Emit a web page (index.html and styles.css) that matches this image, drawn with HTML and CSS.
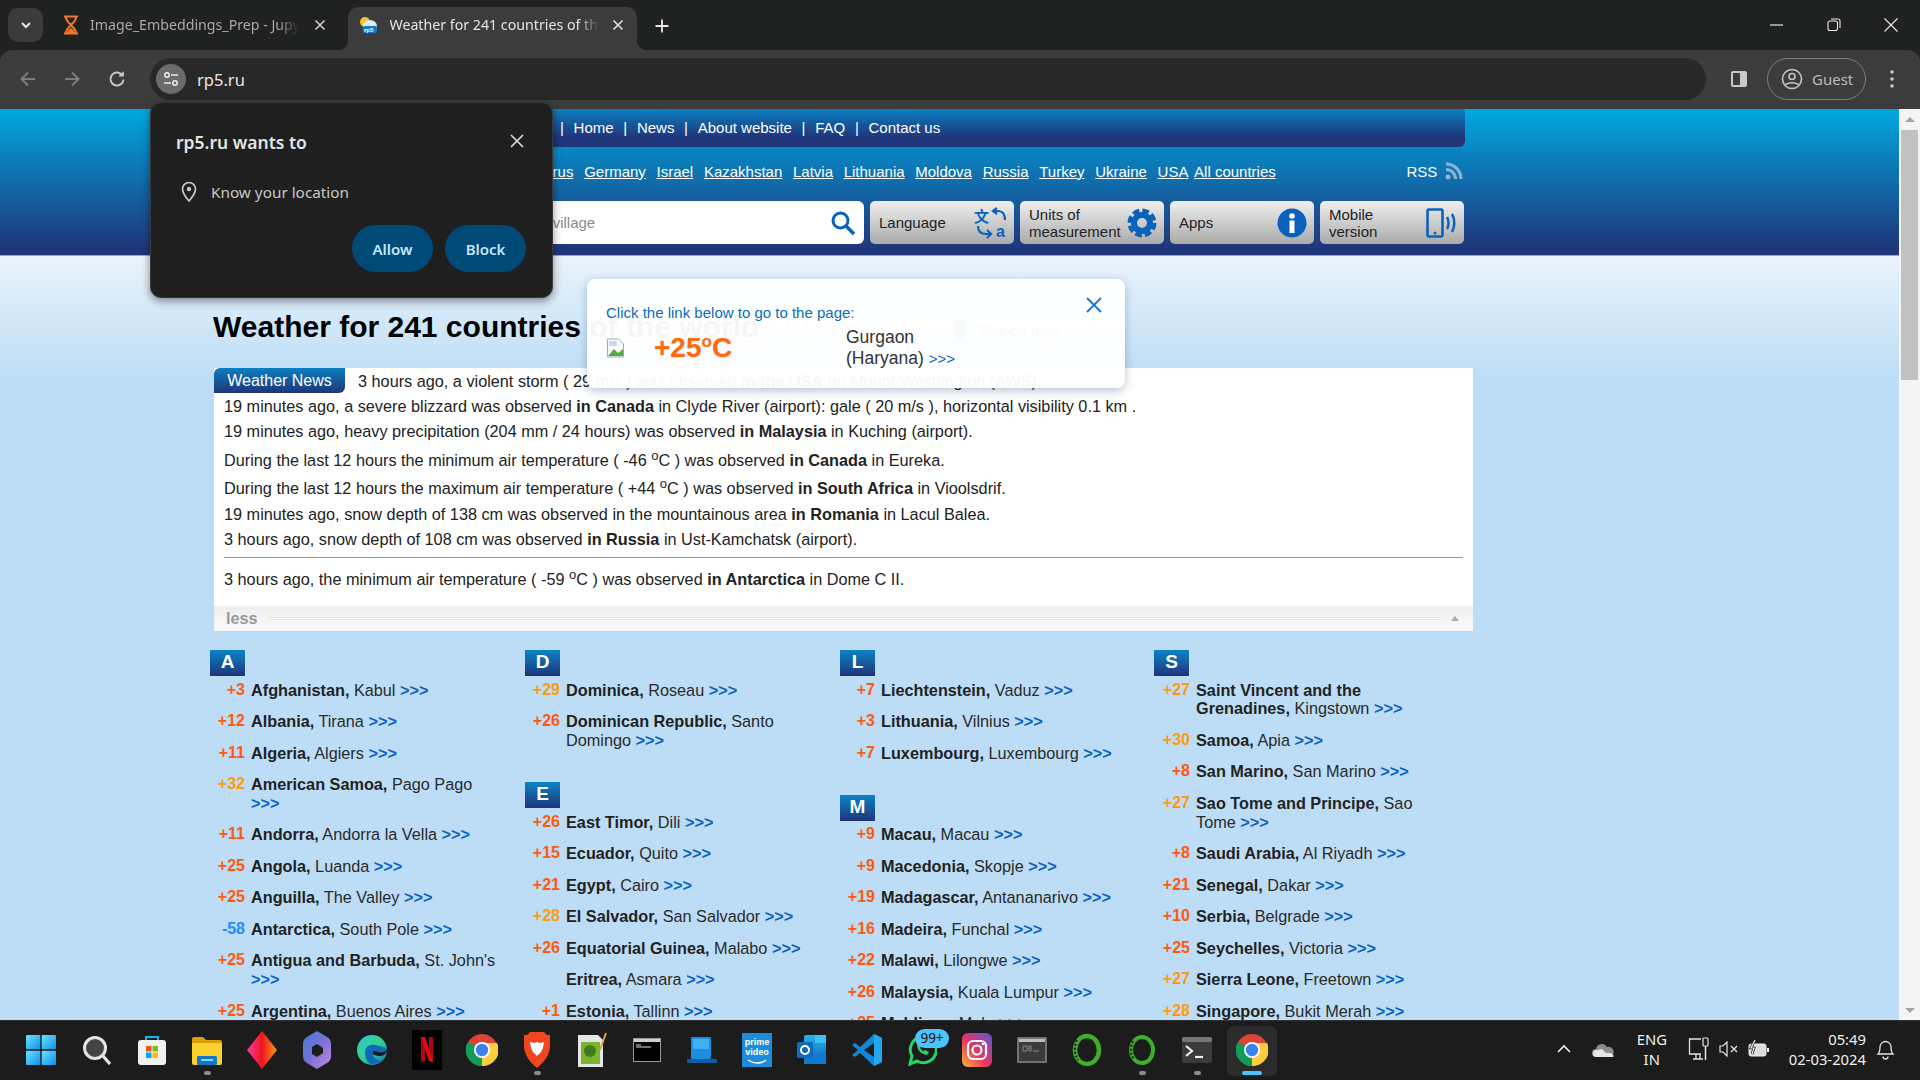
FILE: index.html
```html
<!DOCTYPE html>
<html lang="en">
<head>
<meta charset="utf-8">
<title>Weather for 241 countries of the world</title>
<link rel="stylesheet" href="styles.css">
</head>
<body>
<div class="screen">
  <svg class="defs" width="0" height="0">
    <defs>
      <linearGradient id="gWin" x1="0" y1="0" x2="1" y2="1"><stop offset="0" stop-color="#6fe3fb"/><stop offset="1" stop-color="#0c8ff0"/></linearGradient>
      <linearGradient id="gDia" x1="0" y1="0" x2="1" y2="0"><stop offset="0" stop-color="#f53fa0"/><stop offset=".5" stop-color="#f0141e"/><stop offset="1" stop-color="#f79a12"/></linearGradient>
      <linearGradient id="gCop" x1="0" y1="0" x2="1" y2="1"><stop offset="0" stop-color="#3b7fd8"/><stop offset=".5" stop-color="#7b6fd8"/><stop offset="1" stop-color="#c48be0"/></linearGradient>
      <linearGradient id="gEdge" x1="0" y1="0" x2="1" y2="1"><stop offset="0" stop-color="#2fc4d8"/><stop offset=".5" stop-color="#37d08f"/><stop offset="1" stop-color="#0f6fc0"/></linearGradient>
      <linearGradient id="gInsta" x1="0" y1="1" x2="1" y2="0"><stop offset="0" stop-color="#fdb53a"/><stop offset=".45" stop-color="#e8355f"/><stop offset="1" stop-color="#5d55d8"/></linearGradient>
      <linearGradient id="gOut" x1="0" y1="0" x2="0" y2="1"><stop offset="0" stop-color="#29b3f0"/><stop offset="1" stop-color="#0b62b5"/></linearGradient>
    </defs>
  </svg>

  <div class="tabstrip">
    <div class="tab-menu"><svg width="14" height="14" viewBox="0 0 14 14"><path d="M3 5l4 4 4-4" fill="none" stroke="#e6e6e6" stroke-width="2"/></svg></div>
    <div class="tab">
      <svg class="fav" width="18" height="20" viewBox="0 0 18 20"><path d="M2 1.500h14M2 18.500h14M4 2c0 5 4 6 5 8 1-2 5-3 5-8M4 18c0-4 4-6 5-8 1 2 5 4 5 8" fill="none" stroke="#f37726" stroke-width="2"/><path d="M5 18c1-3 3-4 4-5 1 1 3 2 4 5z" fill="#f37726"/></svg>
      <span class="tab-title">Image_Embeddings_Prep - Jupyter Notebook</span>
      <svg class="tab-x" width="12" height="12" viewBox="0 0 12 12"><path d="M1.500 1.500l9 9M10.500 1.500l-9 9" stroke="#d0d0d0" stroke-width="1.600"/></svg>
    </div>
    <div class="tab tab-active">
      <svg class="fav" width="20" height="20" viewBox="0 0 20 20"><circle cx="7" cy="7" r="5" fill="#f7c325"/><ellipse cx="12" cy="11" rx="7" ry="6" fill="#dcebf8"/><rect x="5" y="11" width="14" height="7" rx="1.500" fill="#1b75c9"/><text x="6" y="17" class="fav-text">rp5</text></svg>
      <span class="tab-title">Weather for 241 countries of the world</span>
      <svg class="tab-x" width="12" height="12" viewBox="0 0 12 12"><path d="M1.500 1.500l9 9M10.500 1.500l-9 9" stroke="#e6e6e6" stroke-width="1.600"/></svg>
    </div>
    <svg class="tab-new" width="16" height="16" viewBox="0 0 16 16"><path d="M8 1.500v13M1.500 8h13" stroke="#e6e6e6" stroke-width="1.800"/></svg>
    <div class="win-controls">
      <svg width="14" height="14" viewBox="0 0 14 14"><path d="M0 7h13" stroke="#e8e8e8" stroke-width="1.200"/></svg>
      <svg width="14" height="14" viewBox="0 0 14 14"><rect x="1" y="3" width="9.500" height="9.500" rx="2" fill="none" stroke="#e8e8e8" stroke-width="1.100"/><path d="M4 1h7a2 2 0 0 1 2 2v7" fill="none" stroke="#e8e8e8" stroke-width="1.100"/></svg>
      <svg width="14" height="14" viewBox="0 0 14 14"><path d="M.500.500l13 13M13.500.500l-13 13" stroke="#e8e8e8" stroke-width="1.100"/></svg>
    </div>
  </div>

  <div class="toolbar">
    <svg class="nav nav-back" width="20" height="20" viewBox="0 0 20 20"><path d="M17 10H4M10 3.500L3.500 10l6.500 6.500" fill="none" stroke="#7c7c7c" stroke-width="2"/></svg>
    <svg class="nav" width="20" height="20" viewBox="0 0 20 20"><path d="M3 10h13M10 3.500l6.500 6.500-6.500 6.500" fill="none" stroke="#7c7c7c" stroke-width="2"/></svg>
    <svg class="nav nav-reload" width="20" height="20" viewBox="0 0 20 20"><path d="M16.500 10.500a6.500 6.500 0 1 1-2-5.200" fill="none" stroke="#c8c8c8" stroke-width="2"/><path d="M16.800 2v5.500h-5.500z" fill="#c8c8c8"/></svg>
    <div class="omnibox">
      <span class="site-icon"><svg width="18" height="18" viewBox="0 0 18 18"><circle cx="5" cy="5" r="2.200" fill="none" stroke="#eee" stroke-width="1.500"/><path d="M9 5h7M2 13h7" stroke="#eee" stroke-width="1.600"/><circle cx="13" cy="13" r="2.200" fill="none" stroke="#eee" stroke-width="1.500"/></svg></span>
      <span class="url">rp5.ru</span>
    </div>
    <svg class="side-panel" width="18" height="18" viewBox="0 0 18 18"><rect x="1" y="1" width="16" height="16" rx="2" fill="#c9c9c9"/><rect x="3" y="3" width="7" height="12" fill="#3c3c3c"/></svg>
    <div class="guest">
      <svg width="22" height="22" viewBox="0 0 22 22"><circle cx="11" cy="11" r="9.500" fill="none" stroke="#c4c4c4" stroke-width="1.600"/><circle cx="11" cy="8.500" r="3" fill="none" stroke="#c4c4c4" stroke-width="1.600"/><path d="M4.500 17c2-3 11-3 13 0" fill="none" stroke="#c4c4c4" stroke-width="1.600"/></svg>
      <span>Guest</span>
    </div>
    <svg class="kebab" width="4" height="20" viewBox="0 0 4 20"><circle cx="2" cy="3" r="1.800" fill="#c8c8c8"/><circle cx="2" cy="10" r="1.800" fill="#c8c8c8"/><circle cx="2" cy="17" r="1.800" fill="#c8c8c8"/></svg>
  </div>

  <div class="viewport">
    <main class="page">
      <header class="site-head">
        <nav class="topbar">
          <span>|</span><a>Home</a><span>|</span><a>News</a><span>|</span><a>About website</a><span>|</span><a>FAQ</a><span>|</span><a>Contact us</a>
        </nav>
        <div class="countries-bar">
          <a class="cl">Belarus</a><a class="cl">Germany</a><a class="cl">Israel</a><a class="cl">Kazakhstan</a><a class="cl">Latvia</a><a class="cl">Lithuania</a><a class="cl">Moldova</a><a class="cl">Russia</a><a class="cl">Turkey</a><a class="cl">Ukraine</a><a class="cl">USA</a><a class="cl cl-all">All countries</a>
          <span class="rss">RSS</span>
          <svg class="rss-icon" width="18" height="18" viewBox="0 0 18 18"><circle cx="3" cy="15" r="2.500" fill="#8fb3d6"/><path d="M1 7.500a9.500 9.500 0 0 1 9.500 9.500M1 2a15 15 0 0 1 15 15" fill="none" stroke="#8fb3d6" stroke-width="3"/></svg>
        </div>
        <div class="tools">
          <div class="search"><span class="placeholder">Town or village</span>
            <svg width="26" height="26" viewBox="0 0 26 26"><circle cx="10.500" cy="10.500" r="7.500" fill="none" stroke="#0b62bd" stroke-width="3"/><path d="M16 16l8 8" stroke="#0b62bd" stroke-width="3.500"/></svg>
          </div>
          <div class="tool"><span>Language</span>
            <svg width="34" height="32" viewBox="0 0 34 32"><text x="0" y="15" class="lang-zh">文</text><text x="22" y="30" class="lang-a">a</text><path d="M19 4h5c5 0 7 4 7 9M23 1l-4 3 4 3M4 19c0 5 3 8 8 8h4M13 23l4 4-4 4" fill="none" stroke="#0b62bd" stroke-width="2.200"/></svg>
          </div>
          <div class="tool tool-gear"><span>Units of<br>measurement</span>
            <svg width="30" height="30" viewBox="0 0 30 30"><circle cx="15" cy="15" r="8" fill="none" stroke="#0b62bd" stroke-width="6"/><circle cx="15" cy="15" r="12" fill="none" stroke="#0b62bd" stroke-width="5" stroke-dasharray="6.500 2.920"/></svg>
          </div>
          <div class="tool tool-gear"><span>Apps</span>
            <svg width="30" height="30" viewBox="0 0 30 30"><circle cx="15" cy="15" r="14.500" fill="#0b62bd"/><circle cx="15" cy="8" r="2.800" fill="#fff"/><rect x="12.500" y="12.500" width="5" height="12.500" fill="#fff"/></svg>
          </div>
          <div class="tool"><span>Mobile<br>version</span>
            <svg width="32" height="30" viewBox="0 0 32 30"><rect x="1.500" y="1.500" width="15" height="27" rx="1.500" fill="none" stroke="#0b62bd" stroke-width="2.600"/><circle cx="9" cy="25" r="1.500" fill="#0b62bd"/><path d="M21 9c2 3 2 9 0 12M26 6c3 5 3 13 0 18" fill="none" stroke="#0b62bd" stroke-width="2.500"/></svg>
          </div>
        </div>
      </header>

      <div class="head-line">
        <h1>Weather for 241 countries of the world</h1>
        <svg class="clock" width="24" height="24" viewBox="0 0 24 24"><circle cx="12" cy="12" r="10" fill="none" stroke="#9aa" stroke-width="2"/><path d="M12 6v6l4 3" fill="none" stroke="#9aa" stroke-width="2"/></svg>
        <span class="utc">UTC+5:30</span>
        <svg class="pin" width="16" height="24" viewBox="0 0 16 24"><path d="M8 1a7 7 0 0 0-7 7c0 5 7 15 7 15s7-10 7-15a7 7 0 0 0-7-7z" fill="#0b6cbb"/></svg>
        <span class="see-map">See on map</span>
      </div>

      <section class="news">
        <div class="news-first"><span class="news-tab">Weather News</span><span>3 hours ago, a violent storm ( 29 m/s ) was observed <b>in the USA</b> on Mount Washington (AWS).</span></div>
        <p class="nl">19 minutes ago, a severe blizzard was observed <b>in Canada</b> in Clyde River (airport): gale ( 20 m/s ), horizontal visibility 0.1 km .</p>
        <p class="nl">19 minutes ago, heavy precipitation (204 mm / 24 hours) was observed <b>in Malaysia</b> in Kuching (airport).</p>
        <p class="nl nl-s1">During the last 12 hours the minimum air temperature ( -46 <sup>o</sup>C ) was observed <b>in Canada</b> in Eureka.</p>
        <p class="nl nl-s2">During the last 12 hours the maximum air temperature ( +44 <sup>o</sup>C ) was observed <b>in South Africa</b> in Vioolsdrif.</p>
        <p class="nl">19 minutes ago, snow depth of 138 cm was observed in the mountainous area <b>in Romania</b> in Lacul Balea.</p>
        <p class="nl">3 hours ago, snow depth of 108 cm was observed <b>in Russia</b> in Ust-Kamchatsk (airport).</p>
        <div class="news-rule"></div>
        <p class="nl">3 hours ago, the minimum air temperature ( -59 <sup>o</sup>C ) was observed <b>in Antarctica</b> in Dome C II.</p>
        <div class="less"><span>less</span><i class="less-line"></i><i class="less-arrow"></i></div>
      </section>

      <section class="countries">
        <div class="col">
          <div class="letter">A</div>
          <div class="row"><span class="t hot">+3</span><p class="n"><b>Afghanistan,</b> Kabul <a>&gt;&gt;&gt;</a></p></div>
          <div class="row"><span class="t hot">+12</span><p class="n"><b>Albania,</b> Tirana <a>&gt;&gt;&gt;</a></p></div>
          <div class="row"><span class="t hot">+11</span><p class="n"><b>Algeria,</b> Algiers <a>&gt;&gt;&gt;</a></p></div>
          <div class="row"><span class="t warm">+32</span><p class="n"><b>American Samoa,</b> Pago Pago <a>&gt;&gt;&gt;</a></p></div>
          <div class="row"><span class="t hot">+11</span><p class="n"><b>Andorra,</b> Andorra la Vella <a>&gt;&gt;&gt;</a></p></div>
          <div class="row"><span class="t hot">+25</span><p class="n"><b>Angola,</b> Luanda <a>&gt;&gt;&gt;</a></p></div>
          <div class="row"><span class="t hot">+25</span><p class="n"><b>Anguilla,</b> The Valley <a>&gt;&gt;&gt;</a></p></div>
          <div class="row"><span class="t cold">-58</span><p class="n"><b>Antarctica,</b> South Pole <a>&gt;&gt;&gt;</a></p></div>
          <div class="row"><span class="t hot">+25</span><p class="n"><b>Antigua and Barbuda,</b> St. John's <a>&gt;&gt;&gt;</a></p></div>
          <div class="row"><span class="t hot">+25</span><p class="n"><b>Argentina,</b> Buenos Aires <a>&gt;&gt;&gt;</a></p></div>
        </div>
        <div class="col">
          <div class="letter">D</div>
          <div class="row"><span class="t warm">+29</span><p class="n"><b>Dominica,</b> Roseau <a>&gt;&gt;&gt;</a></p></div>
          <div class="row"><span class="t hot">+26</span><p class="n"><b>Dominican Republic,</b> Santo Domingo <a>&gt;&gt;&gt;</a></p></div>
          <div class="letter letter-next">E</div>
          <div class="row"><span class="t hot">+26</span><p class="n"><b>East Timor,</b> Dili <a>&gt;&gt;&gt;</a></p></div>
          <div class="row"><span class="t hot">+15</span><p class="n"><b>Ecuador,</b> Quito <a>&gt;&gt;&gt;</a></p></div>
          <div class="row"><span class="t hot">+21</span><p class="n"><b>Egypt,</b> Cairo <a>&gt;&gt;&gt;</a></p></div>
          <div class="row"><span class="t warm">+28</span><p class="n"><b>El Salvador,</b> San Salvador <a>&gt;&gt;&gt;</a></p></div>
          <div class="row"><span class="t hot">+26</span><p class="n"><b>Equatorial Guinea,</b> Malabo <a>&gt;&gt;&gt;</a></p></div>
          <div class="row"><span class="t"></span><p class="n"><b>Eritrea,</b> Asmara <a>&gt;&gt;&gt;</a></p></div>
          <div class="row"><span class="t hot">+1</span><p class="n"><b>Estonia,</b> Tallinn <a>&gt;&gt;&gt;</a></p></div>
        </div>
        <div class="col">
          <div class="letter">L</div>
          <div class="row"><span class="t hot">+7</span><p class="n"><b>Liechtenstein,</b> Vaduz <a>&gt;&gt;&gt;</a></p></div>
          <div class="row"><span class="t hot">+3</span><p class="n"><b>Lithuania,</b> Vilnius <a>&gt;&gt;&gt;</a></p></div>
          <div class="row"><span class="t hot">+7</span><p class="n"><b>Luxembourg,</b> Luxembourg <a>&gt;&gt;&gt;</a></p></div>
          <div class="letter letter-next">M</div>
          <div class="row"><span class="t hot">+9</span><p class="n"><b>Macau,</b> Macau <a>&gt;&gt;&gt;</a></p></div>
          <div class="row"><span class="t hot">+9</span><p class="n"><b>Macedonia,</b> Skopje <a>&gt;&gt;&gt;</a></p></div>
          <div class="row"><span class="t hot">+19</span><p class="n"><b>Madagascar,</b> Antananarivo <a>&gt;&gt;&gt;</a></p></div>
          <div class="row"><span class="t hot">+16</span><p class="n"><b>Madeira,</b> Funchal <a>&gt;&gt;&gt;</a></p></div>
          <div class="row"><span class="t hot">+22</span><p class="n"><b>Malawi,</b> Lilongwe <a>&gt;&gt;&gt;</a></p></div>
          <div class="row"><span class="t hot">+26</span><p class="n"><b>Malaysia,</b> Kuala Lumpur <a>&gt;&gt;&gt;</a></p></div>
          <div class="row"><span class="t hot">+25</span><p class="n"><b>Maldives,</b> Male <a>&gt;&gt;&gt;</a></p></div>
        </div>
        <div class="col col-last">
          <div class="letter">S</div>
          <div class="row"><span class="t warm">+27</span><p class="n"><b>Saint Vincent and the Grenadines,</b> Kingstown <a>&gt;&gt;&gt;</a></p></div>
          <div class="row"><span class="t warm">+30</span><p class="n"><b>Samoa,</b> Apia <a>&gt;&gt;&gt;</a></p></div>
          <div class="row"><span class="t hot">+8</span><p class="n"><b>San Marino,</b> San Marino <a>&gt;&gt;&gt;</a></p></div>
          <div class="row"><span class="t warm">+27</span><p class="n"><b>Sao Tome and Principe,</b> Sao Tome <a>&gt;&gt;&gt;</a></p></div>
          <div class="row"><span class="t hot">+8</span><p class="n"><b>Saudi Arabia,</b> Al Riyadh <a>&gt;&gt;&gt;</a></p></div>
          <div class="row"><span class="t hot">+21</span><p class="n"><b>Senegal,</b> Dakar <a>&gt;&gt;&gt;</a></p></div>
          <div class="row"><span class="t hot">+10</span><p class="n"><b>Serbia,</b> Belgrade <a>&gt;&gt;&gt;</a></p></div>
          <div class="row"><span class="t hot">+25</span><p class="n"><b>Seychelles,</b> Victoria <a>&gt;&gt;&gt;</a></p></div>
          <div class="row"><span class="t warm">+27</span><p class="n"><b>Sierra Leone,</b> Freetown <a>&gt;&gt;&gt;</a></p></div>
          <div class="row"><span class="t warm">+28</span><p class="n"><b>Singapore,</b> Bukit Merah <a>&gt;&gt;&gt;</a></p></div>
        </div>
      </section>

      <aside class="geo-tip">
        <svg class="geo-x" width="16" height="16" viewBox="0 0 16 16"><path d="M1 1l14 14M15 1L1 15" stroke="#1b75c9" stroke-width="1.800"/></svg>
        <p class="geo-hint">Click the link below to go to the page:</p>
        <div class="geo-row">
          <svg class="broken" width="20" height="20" viewBox="0 0 20 20"><path d="M1.500 1h11l5 5v13h-16z" fill="#fff" stroke="#9ab" stroke-width="1"/><path d="M2 18l6-7 4 4 5-4v7z" fill="#5aa845"/><path d="M3 3h8v5H3z" fill="#c6d8f5"/></svg>
          <span class="geo-temp">+25<sup>o</sup>C</span>
          <span class="geo-city">Gurgaon<br>(Haryana) <a>&gt;&gt;&gt;</a></span>
        </div>
      </aside>
    </main>
    <div class="scrollbar">
      <i class="sb-up"></i>
      <i class="sb-thumb"></i>
      <i class="sb-down"></i>
    </div>
  </div>

  <div class="perm-popup">
    <svg class="perm-x" width="14" height="14" viewBox="0 0 14 14"><path d="M1 1l12 12M13 1L1 13" stroke="#d8d8d8" stroke-width="1.700"/></svg>
    <h2>rp5.ru wants to</h2>
    <div class="perm-line">
      <svg width="16" height="22" viewBox="0 0 16 22"><path d="M8 1.500a6.500 6.500 0 0 0-6.500 6.500c0 4.500 6.500 12 6.500 12s6.500-7.500 6.500-12A6.500 6.500 0 0 0 8 1.500z" fill="none" stroke="#c7c7c7" stroke-width="1.700"/><circle cx="8" cy="8" r="2.200" fill="#c7c7c7"/></svg>
      <span>Know your location</span>
    </div>
    <div class="perm-actions"><span class="perm-btn">Allow</span><span class="perm-btn">Block</span></div>
  </div>

  <footer class="taskbar">
    <div class="ti ti-start"><svg width="30" height="30" viewBox="0 0 30 30"><rect x="0" y="0" width="14.300" height="14.300" rx="1" fill="url(#gWin)"/><rect x="15.700" y="0" width="14.300" height="14.300" rx="1" fill="url(#gWin)"/><rect x="0" y="15.700" width="14.300" height="14.300" rx="1" fill="url(#gWin)"/><rect x="15.700" y="15.700" width="14.300" height="14.300" rx="1" fill="url(#gWin)"/></svg></div>
    <div class="ti"><svg width="30" height="30" viewBox="0 0 30 30"><circle cx="13" cy="13" r="10.500" fill="#444" stroke="#e4e4e4" stroke-width="3"/><path d="M21 21l7 8" stroke="#e4e4e4" stroke-width="3.200"/></svg></div>
    <div class="ti"><svg width="30" height="30" viewBox="0 0 30 30"><path d="M9 6V2h12v4" fill="none" stroke="#19b5e8" stroke-width="2"/><rect x="1" y="5" width="28" height="25" rx="3" fill="#f1f1f1"/><rect x="9" y="11" width="5.500" height="5.500" fill="#f05325"/><rect x="15.500" y="11" width="5.500" height="5.500" fill="#81bc06"/><rect x="9" y="17.500" width="5.500" height="5.500" fill="#05a6f0"/><rect x="15.500" y="17.500" width="5.500" height="5.500" fill="#ffba08"/></svg></div>
    <div class="ti ti-open"><svg width="30" height="30" viewBox="0 0 30 30"><path d="M0 4a2 2 0 0 1 2-2h9l3 3h14a2 2 0 0 1 2 2v3H0z" fill="#d9a00c"/><path d="M0 8h30v20a2 2 0 0 1-2 2H2a2 2 0 0 1-2-2z" fill="#fbd12f"/><rect x="5" y="21" width="20" height="9" rx="1.500" fill="#0f78c8"/><rect x="9" y="24" width="12" height="2" fill="#8fd0f7"/></svg></div>
    <div class="ti"><svg width="30" height="38" viewBox="0 0 30 38"><polygon points="15,0 30,19 15,38 0,19" fill="url(#gDia)"/></svg></div>
    <div class="ti"><svg width="28" height="38" viewBox="0 0 28 38"><path d="M14 0l10 6c3 2 4 4 4 7v12c0 3-1 5-4 7l-10 6-10-6c-3-2-4-4-4-7V13c0-3 1-5 4-7z" fill="url(#gCop)"/><path d="M14 13l6 4v5l-6 4-5-3v-7z" fill="#1c1c1c"/></svg></div>
    <div class="ti"><svg width="30" height="30" viewBox="0 0 30 30"><circle cx="15" cy="15" r="15" fill="url(#gEdge)"/><path d="M30 15c0 4-4 6-8 6-6 0-8-4-8-6 0-3 3-5 6-4 3 0 6 2 10 4z" fill="#1c1c1c"/><path d="M8 17c0-6 6-8 10-7 6 1 12 3 12 5-2 2-5 3-8 2-3 0-5-2-5-1-2 1-1 4 0 6 2 3 6 4 8 3-3 3-7 5-11 4-4-1-6-7-6-12z" fill="#0e6ab8"/></svg></div>
    <div class="ti"><svg width="30" height="40" viewBox="0 0 30 40"><rect width="30" height="40" fill="#000"/><path d="M9 7h4v24l-4 1zM17 7h4v25l-4-1z" fill="#b1060f"/><polygon points="9,7 13,7 21,32 17,31" fill="#e50914"/></svg></div>
    <div class="ti"><svg width="32" height="32" viewBox="0 0 32 32"><circle cx="16" cy="16" r="16" fill="#db4437"/><path d="M16 16L2 8a16 16 0 0 0 14 24z" fill="#0f9d58"/><path d="M16 16l0 16A16 16 0 0 0 31 9H16z" fill="#ffcd40"/><circle cx="16" cy="16" r="8" fill="#fff"/><circle cx="16" cy="16" r="6.200" fill="#3b82ef"/></svg></div>
    <div class="ti ti-open"><svg width="26" height="36" viewBox="0 0 26 36"><path d="M6 0h14l3 3 3 0v11c0 10-8 18-13 22C8 32 0 24 0 14V3h3z" fill="#f0461e"/><path d="M6 10l4 1 3-1 3 1 4-1-1 6-2 4-4 4-4-4-2-4z" fill="#fff"/></svg></div>
    <div class="ti"><svg width="30" height="36" viewBox="0 0 30 36"><path d="M1 3h20l5 5v27H1z" fill="#e6e6e6"/><rect x="4" y="10" width="19" height="22" fill="#7bb52f"/><circle cx="13" cy="19" r="6" fill="#3f7a1c"/><path d="M23 18L29 1" stroke="#d8a53c" stroke-width="2"/></svg></div>
    <div class="ti"><svg width="28" height="24" viewBox="0 0 28 24"><rect x=".5" y=".5" width="27" height="23" fill="#000" stroke="#9a9a9a"/><rect x="1" y="1" width="26" height="3" fill="#cfcfcf"/><path d="M3 7h5M3 9h15" stroke="#ddd" stroke-width="1"/></svg></div>
    <div class="ti"><svg width="30" height="30" viewBox="0 0 30 30"><rect x="4" y="2" width="20" height="22" rx="1" fill="#1a8fe0"/><rect x="0" y="24" width="30" height="4" fill="#0a5fa8"/><rect x="6" y="4" width="16" height="10" fill="#3fb0f2"/></svg></div>
    <div class="ti"><svg width="30" height="34" viewBox="0 0 30 34"><rect width="30" height="34" fill="#1c8ddb"/><text x="15" y="12" class="prime-t">prime</text><text x="15" y="22" class="prime-t">video</text><path d="M6 27c6 4 13 4 18 0" fill="none" stroke="#fff" stroke-width="1.500"/></svg></div>
    <div class="ti"><svg width="30" height="32" viewBox="0 0 30 32"><rect x="7" y="1" width="22" height="29" rx="2" fill="url(#gOut)"/><path d="M7 16l11 8 11-8v14H7z" fill="#0b7ad0"/><rect x="18" y="1" width="11" height="8" fill="#3cc1f2"/><rect x="0" y="8" width="16" height="16" rx="1.500" fill="#0f6cbd"/><circle cx="8" cy="16" r="4" fill="none" stroke="#fff" stroke-width="2"/></svg></div>
    <div class="ti"><svg width="30" height="32" viewBox="0 0 30 32"><path d="M22 0l8 4v24l-8 4L8 19l-5 4-3-2 6-5-6-5 3-2 5 4z" fill="#0f88d8"/><path d="M22 0l8 4v24l-8 4z" fill="#22a8ee"/><path d="M22 9L12 16l10 7z" fill="#1c1c1c"/></svg></div>
    <div class="ti"><svg width="30" height="32" viewBox="0 0 30 32"><path d="M3 30l2-8a13 13 0 1 1 5 5z" fill="none" stroke="#25d366" stroke-width="3"/><path d="M10 11c0 5 4 9 10 10l2-3-4-2-2 1-3-3 1-2-2-4z" fill="#25d366"/></svg><span class="wa-badge">99+</span></div>
    <div class="ti"><svg width="30" height="34" viewBox="0 0 30 34"><rect width="30" height="34" rx="6" fill="url(#gInsta)"/><rect x="6" y="8" width="18" height="18" rx="5" fill="none" stroke="#fff" stroke-width="2.200"/><circle cx="15" cy="17" r="4.500" fill="none" stroke="#fff" stroke-width="2.200"/><circle cx="21" cy="11" r="1.300" fill="#fff"/></svg></div>
    <div class="ti"><svg width="30" height="26" viewBox="0 0 30 26"><rect x="1" y="1" width="28" height="24" fill="#3a3a3a" stroke="#8a8a8a" stroke-width="1.500"/><rect x="2" y="2" width="26" height="3" fill="#bbb"/><path d="M6 9h4v5H6zM12 9h2v5h-2zM16 14h6" stroke="#888" fill="none"/></svg></div>
    <div class="ti"><svg width="30" height="34" viewBox="0 0 30 34"><ellipse cx="15" cy="17" rx="12" ry="14" fill="none" stroke="#3fae2a" stroke-width="4.500"/><path d="M5 7c-3 6-3 14 1 20" fill="none" stroke="#1c1c1c" stroke-width="2" stroke-dasharray="2 2"/></svg></div>
    <div class="ti ti-open"><svg width="28" height="32" viewBox="0 0 28 32"><ellipse cx="14" cy="16" rx="11" ry="13" fill="none" stroke="#3fae2a" stroke-width="4"/><path d="M5 7c-3 6-3 13 1 18" fill="none" stroke="#1c1c1c" stroke-width="2" stroke-dasharray="2 2"/></svg></div>
    <div class="ti ti-open"><svg width="30" height="26" viewBox="0 0 30 26"><rect width="30" height="26" rx="2" fill="#3a3a3a"/><rect width="30" height="5" rx="2" fill="#777"/><path d="M4 9l6 5-6 5" fill="none" stroke="#eee" stroke-width="2.200"/><path d="M13 20h8" stroke="#eee" stroke-width="2.200"/></svg></div>
    <div class="ti ti-active"><svg width="32" height="32" viewBox="0 0 32 32"><circle cx="16" cy="16" r="16" fill="#db4437"/><path d="M16 16L2 8a16 16 0 0 0 14 24z" fill="#0f9d58"/><path d="M16 16l0 16A16 16 0 0 0 31 9H16z" fill="#ffcd40"/><circle cx="16" cy="16" r="8" fill="#fff"/><circle cx="16" cy="16" r="6.200" fill="#3b82ef"/></svg></div>

    <div class="tray">
      <svg class="tr-caret" width="16" height="10" viewBox="0 0 16 10"><path d="M2 8l6-6 6 6" fill="none" stroke="#eee" stroke-width="1.600"/></svg>
      <svg class="tr-cloud" width="22" height="15" viewBox="0 0 22 15"><path d="M4 15a4 4 0 0 1 0-8 6 6 0 0 1 11-2 5 5 0 0 1 3 10z" fill="#8d8d8d"/><path d="M4 15a3.500 3.500 0 0 1 1-7l5-1 4 4 5 0 3 3-1 1z" fill="#e6e6e6"/></svg>
      <div class="tr-lang">ENG<br>IN</div>
      <svg class="tr-net" width="22" height="24" viewBox="0 0 22 24"><path d="M13 2H1.500v15H13" fill="none" stroke="#e4e4e4" stroke-width="1.300"/><path d="M5 22h10M8 17v5M12 17v5" stroke="#e4e4e4" stroke-width="1.300"/><rect x="15" y="1" width="5" height="8" rx="1" fill="none" stroke="#e4e4e4" stroke-width="1.200"/><path d="M17.500 9v14" stroke="#e4e4e4" stroke-width="1.500"/></svg>
      <svg class="tr-sound" width="20" height="16" viewBox="0 0 20 16"><path d="M1 5h3l4-4v14l-4-4H1z" fill="none" stroke="#e4e4e4" stroke-width="1.200"/><path d="M12 5l6 6M18 5l-6 6" stroke="#e4e4e4" stroke-width="1.300"/></svg>
      <svg class="tr-batt" width="22" height="18" viewBox="0 0 22 18"><rect x="1" y="4" width="17" height="12" rx="2" fill="#ddd" stroke="#eee"/><rect x="19" y="8" width="2" height="4" fill="#eee"/><path d="M7 0L3 8h3l-2 6" fill="none" stroke="#1c1c1c" stroke-width="2.600"/><path d="M7 0L3 8h3l-2 6" fill="none" stroke="#eee" stroke-width="1.200"/></svg>
      <div class="tr-time">05:49<br>02-03-2024</div>
      <svg class="tr-bell" width="19" height="22" viewBox="0 0 19 22"><path d="M2 16c2-2 2-4 2-7a5.500 5.500 0 0 1 11 0c0 3 0 5 2 7z" fill="none" stroke="#e4e4e4" stroke-width="1.300"/><path d="M7 18.500a2.500 2.500 0 0 0 5 0" fill="none" stroke="#e4e4e4" stroke-width="1.300"/></svg>
    </div>
  </footer>
</div>
</body>
</html>
```

FILE: styles.css
```css
* { box-sizing: border-box; }
html, body { margin: 0; height: 100%; overflow: hidden; }
body { font-family: "Liberation Sans", Arial, sans-serif; background: #1c1c1c; }
p, h1, h2 { margin: 0; }
a { color: inherit; }
.defs { position: absolute; }
.screen { position: relative; width: 1920px; height: 1080px; display: flex; flex-direction: column; overflow: hidden; background: #202221; }

/* browser tabs */
.tabstrip { height: 50px; flex: none; display: flex; align-items: flex-end; padding-left: 8px; font-family: "Noto Sans", sans-serif; font-size: 14.200px; }
.tab-menu { width: 35px; height: 34px; margin-bottom: 8px; border-radius: 10px; background: #3b3b3b; display: flex; align-items: center; justify-content: center; }
.tab { width: 297px; height: 43px; margin-left: 5px; padding: 0 14px 8px 14px; display: flex; align-items: center; gap: 10px; color: #a9a9a9; position: relative; }
.tab-active { width: 289px; background: #3c3c3c; color: #e4e4e4; border-radius: 10px 10px 0 0; margin-left: 3px; padding-left: 10px; gap: 11.500px; }
.tab-active::before, .tab-active::after { content: ""; position: absolute; bottom: 0; width: 10px; height: 10px; }
.tab-active::before { left: -10px; background: radial-gradient(circle at 0 0, transparent 10px, #3c3c3c 10.500px); }
.tab-active::after { right: -10px; background: radial-gradient(circle at 100% 0, transparent 10px, #3c3c3c 10.500px); }
.fav { flex: none; }
.fav-text { font: bold 6px "Liberation Sans", sans-serif; fill: #fff; }
.tab-title { flex: none; width: 209px; overflow: hidden; white-space: nowrap; -webkit-mask-image: linear-gradient(90deg, #000 90%, transparent); mask-image: linear-gradient(90deg, #000 90%, transparent); }
.tab-x { flex: none; margin-left: 4.500px; }
.tab-active .tab-x { margin-left: 2px; }
.tab-new { margin: 0 0 16px 17px; }
.win-controls { margin-left: auto; display: flex; gap: 43px; padding: 0 22px 18px 0; }

/* toolbar */
.toolbar { height: 59px; flex: none; display: flex; align-items: center; background: #3c3c3c; border-radius: 12px 12px 0 0; padding: 0 0 1px 18px; }
.nav { margin-right: 24px; flex: none; }
.nav-reload { margin-left: 1px; margin-right: 23px; }
.omnibox { width: 1556px; height: 42px; border-radius: 21px; background: #282828; display: flex; align-items: center; padding-left: 6px; gap: 11px; }
.site-icon { width: 30px; height: 30px; border-radius: 50%; background: #6b6b6b; display: flex; align-items: center; justify-content: center; }
.url { color: #e6e6e6; font: 16.500px "Noto Sans", sans-serif; }
.side-panel { margin-left: 24px; flex: none; }
.guest { margin-left: 19px; width: 99px; height: 42px; border: 1.500px solid #7f7f7f; border-radius: 21px; display: flex; align-items: center; gap: 9px; padding-left: 13px; color: #b9b9b9; font: 15px "Noto Sans", sans-serif; }
.kebab { margin-left: 24px; flex: none; }

/* page */
.viewport { height: 911px; flex: none; display: flex; }
.page { position: relative; width: 1899px; height: 911px; overflow: hidden; flex: none; background: linear-gradient(#eaf3fb 146px, #bcddf5 270px); color: #222; font-size: 15px; }
.site-head { height: 147px; background: linear-gradient(#00a8e0, #20357a 96%); border-bottom: 1px solid #8ea6d4; display: flex; flex-direction: column; align-items: flex-end; padding-right: 434px; color: #fff; }
.topbar { width: 1065px; height: 38px; flex: none; background: linear-gradient(#0a7fc0, #20357a 75%); border-radius: 0 0 6px 6px; display: flex; align-items: center; gap: 9.700px; padding: 0 0 2px 160px; }
.countries-bar { height: 54px; flex: none; display: flex; align-items: center; gap: 10.700px; padding: 0 2px 6px 0; }
.cl { text-decoration: underline; }
.cl-all { margin-left: -5px; }
.rss { margin-left: 120px; }
.rss-icon { margin-left: -3px; }
.tools { display: flex; gap: 6px; margin-right: 1px; }
.search { width: 463px; height: 43px; background: #fff; border-radius: 0 6px 6px 0; display: flex; align-items: center; justify-content: space-between; padding: 0 8px 0 95px; }
.placeholder { color: #8a8a8a; }
.tool { width: 144px; height: 43px; border-radius: 5px; background: linear-gradient(#f0f0f0, #aaa); color: #222; display: flex; align-items: center; justify-content: space-between; padding: 0 6px 0 9px; line-height: 17px; }
.tool-gear { padding-right: 7px; }
.lang-zh { font: bold 15px "Noto Sans CJK SC", sans-serif; fill: #0b62bd; }
.lang-a { font: bold 16px "Liberation Sans", sans-serif; fill: #0b62bd; }

.head-line { height: 112px; margin-left: 213px; padding-top: 29px; display: flex; align-items: center; }
h1 { font-size: 30px; color: #000; white-space: nowrap; }
.clock { margin-left: 26px; }
.utc { margin-left: 6px; color: #888; }
.pin { margin: 6px 0 0 68px; }
.see-map { margin: 8px 0 0 11px; color: #0b6cbb; font-size: 15px; }

.news { margin-left: 214px; width: 1259px; height: 263px; background: #fff; display: flex; flex-direction: column; font-size: 16.250px; }
.news-first { height: 25.500px; flex: none; display: flex; line-height: 26px; }
.news-first > span:last-child { margin-left: 13px; }
.news-tab { width: 131px; height: 25px; background: linear-gradient(#0a7fc0, #20357a); color: #fff; font-size: 16px; line-height: 25px; text-align: center; border-radius: 6px 0 6px 0; }
.nl { height: 25px; flex: none; line-height: 25px; padding-left: 10px; }
.nl sup { font-size: 13px; line-height: 0; }
.nl-s1 { height: 29px; padding-top: 4px; }
.nl-s2 { height: 29px; padding-top: 3px; }
.news-rule { height: 1px; flex: none; margin: 5px 10px 9px; background: #999; width: 1239px; }
.less { margin-top: auto; height: 25px; flex: none; background: linear-gradient(#eee, #fbfbfb); display: flex; align-items: center; gap: 10px; padding: 0 14px 0 12px; color: #999; font-weight: bold; }
.less-line { flex: 1; height: 3px; border-top: 1px solid #e6e6e6; border-bottom: 1px solid #e6e6e6; background: #fafafa; }
.less-arrow { width: 0; height: 0; border: 4.500px solid transparent; border-bottom: 5px solid #aaa; border-top: 0; }

.countries { margin: 19px 0 0 210px; display: flex; font-size: 16.250px; }
.col { width: 315px; flex: none; }
.col-last { width: 314px; margin-left: -1px; }
.col-last .t { width: 36px; }
.letter { width: 35px; height: 26px; background: linear-gradient(#0a84c6, #20357a); color: #fff; font-size: 19px; font-weight: bold; line-height: 24px; text-align: center; margin-bottom: 4.600px; }
.letter-next { margin-top: 19.600px; }
.row { display: flex; gap: 6px; padding-bottom: 12.750px; line-height: 18.750px; }
.t { width: 35px; flex: none; text-align: right; font-weight: bold; white-space: nowrap; font-size: 16px; }
.hot { color: #ff5a0a; }
.warm { color: #ff9a0a; }
.cold { color: #1e90ff; }
.n { width: 246px; flex: none; color: #2a2a2a; }
.n b { color: #222; }
.n a { color: #0b62bd; font-weight: bold; }

/* overlays */
.geo-tip { position: absolute; left: 587px; top: 170px; width: 538px; height: 109px; background: rgba(255, 255, 255, .965); border-radius: 8px; box-shadow: 0 3px 10px rgba(30, 60, 100, .3); padding: 25px 19px 0; }
.geo-x { position: absolute; right: 23px; top: 18px; }
.geo-hint { color: #0b6cbb; font-size: 15px; line-height: 18px; }
.geo-row { display: flex; align-items: center; margin-top: 5px; }
.broken { flex: none; }
.geo-temp { width: 192px; margin-left: 28px; flex: none; color: #ff6a10; font-weight: bold; font-size: 28px; text-shadow: 0 1px 2px rgba(0,0,0,.1); }
.geo-temp sup { font-size: 17px; line-height: 0; }
.geo-city { font-size: 17.500px; line-height: 21px; color: #333; }
.geo-city a { color: #0b62bd; font-size: 15px; }

.scrollbar { width: 21px; flex: none; background: #f4f4f4; display: flex; flex-direction: column; align-items: center; padding-left: 0; position: relative; }
.sb-up { margin-top: 8px; width: 0; height: 0; border: 5px solid transparent; border-bottom: 5px solid #a3a3a3; border-top: 0; }
.sb-thumb { margin-top: 8px; width: 17px; height: 250px; background: #c1c1c1; }
.sb-down { margin-top: auto; margin-bottom: 7px; width: 0; height: 0; border: 5px solid transparent; border-top: 5px solid #a3a3a3; border-bottom: 0; }

.perm-popup { position: absolute; left: 150px; top: 102px; width: 403px; height: 196px; background: #1f1f1f; border-radius: 11px; border: 1px solid #3a3a3a; box-shadow: 0 3px 8px rgba(0, 0, 0, .45); padding: 26px 25px 0; font-family: "Noto Sans", sans-serif; color: #e4e4e4; }
.perm-popup h2 { font-size: 17.500px; font-weight: 600; line-height: 26px; }
.perm-x { position: absolute; right: 28px; top: 31px; }
.perm-line { display: flex; align-items: center; gap: 14px; margin: 26px 0 0 5px; color: #c7c7c7; font-size: 15.300px; }
.perm-actions { position: absolute; right: 26px; top: 122px; display: flex; gap: 12px; }
.perm-btn { width: 81px; height: 47px; border-radius: 24px; background: #004a77; color: #c2e7ff; font-size: 15px; font-weight: 600; display: flex; align-items: center; justify-content: center; }

/* taskbar */
.taskbar { height: 60px; flex: none; display: flex; align-items: center; background: #1c1c1c; border-top: 1px solid #333; padding-left: 12.500px; }
.ti { width: 55px; height: 59px; flex: none; display: flex; align-items: center; justify-content: center; position: relative; padding-bottom: 2px; }
.ti-start { width: 57px; }
.ti-open::after { content: ""; position: absolute; left: 24px; bottom: 5px; width: 7px; height: 4px; border-radius: 2px; background: #8c8c8c; }
.ti-active { background: #2b2b2b; border-radius: 6px; width: 50px; height: 50px; margin-left: 2.500px; }
.ti-active::after { content: ""; position: absolute; left: 15px; bottom: 1px; width: 20px; height: 4px; border-radius: 2px; background: #4cc2ff; }
.wa-badge { position: absolute; left: 20.500px; top: 8px; width: 34px; height: 19px; border-radius: 10px; background: #4cc2ff; color: #111; font: 13.500px/19px "Noto Sans", sans-serif; text-align: center; }
.prime-t { font: bold 9px "Liberation Sans", sans-serif; fill: #fff; text-anchor: middle; }
.tray { margin-left: auto; display: flex; align-items: center; padding: 0 25px 3px 0; color: #f0f0f0; font: 14.800px/20px "Noto Sans", sans-serif; }
.tr-cloud { margin-left: 20px; }
.tr-lang { margin-left: 23px; width: 30px; text-align: center; }
.tr-net { margin-left: 21px; }
.tr-sound { margin-left: 9px; }
.tr-batt { margin-left: 9px; }
.tr-time { margin-left: 19px; text-align: right; }
.tr-bell { margin-left: 10px; }
```
